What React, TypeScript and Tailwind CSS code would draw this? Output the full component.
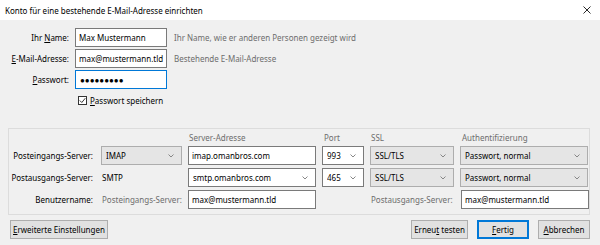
import React from "react"

function Chevron() {
  return (
    <svg width="6" height="4" viewBox="0 0 6 4" className="shrink-0">
      <path d="M0.5 0.5 L3 3 L5.5 0.5" fill="none" stroke="#7a7a7a" strokeWidth="0.9" />
    </svg>
  )
}

function Select({ value, w, editable }: { value: string; w: string; editable?: boolean }) {
  return (
    <div
      className={
        "flex h-[19px] items-center justify-between border pl-[4px] pr-[7px] " +
        w +
        (editable ? " border-[#7a7a7a] bg-white" : " border-[#adadad] bg-[#e5e5e5]")
      }
    >
      <span className="truncate">{value}</span>
      <Chevron />
    </div>
  )
}

function Input({ value, w, focus }: { value: string; w: string; focus?: boolean }) {
  return (
    <div
      className={
        "flex h-[19px] items-center overflow-hidden border bg-white px-[3px] " +
        w +
        (focus ? " border-[#0078d7]" : " border-[#7a7a7a]")
      }
    >
      <span>{value}</span>
    </div>
  )
}

function Button({ children, w, primary }: { children: React.ReactNode; w: string; primary?: boolean }) {
  return (
    <div
      className={
        "flex h-[19px] items-center justify-center bg-[#e1e1e1] " +
        w +
        (primary ? " border-2 border-[#0078d7]" : " border border-[#adadad]")
      }
    >
      {children}
    </div>
  )
}

export default function App() {
  return (
    <div
      className="flex h-[245px] w-[600px] flex-col overflow-hidden whitespace-nowrap bg-[#f0f0f0] text-[8px] leading-[11px] text-black"
      style={{ fontFamily: '"Noto Sans", "Open Sans", sans-serif' }}
    >
      <div className="flex h-[20px] shrink-0 items-center justify-between bg-white pl-[5px] pr-[9px]">
        <span>Konto für eine bestehende E-Mail-Adresse einrichten</span>
        <svg width="8" height="8" viewBox="0 0 8 8">
          <path d="M0.5 0.5 L7.5 7.5 M7.5 0.5 L0.5 7.5" stroke="#111" strokeWidth="0.9" />
        </svg>
      </div>

      <div className="flex flex-col gap-[2px] pt-[8px]">
        <div className="flex items-center">
          <span className="w-[69px] text-right">
            Ihr <u>N</u>ame:
          </span>
          <Input value="Max Mustermann" w="ml-[6px] w-[92px]" />
          <span className="ml-[7px] text-[#6d6d6d]">Ihr Name, wie er anderen Personen gezeigt wird</span>
        </div>
        <div className="flex items-center">
          <span className="w-[69px] text-right">
            <u>E</u>-Mail-Adresse:
          </span>
          <Input value="max@mustermann.tld" w="ml-[6px] w-[92px]" />
          <span className="ml-[7px] text-[#6d6d6d]">Bestehende E-Mail-Adresse</span>
        </div>
        <div className="flex items-center">
          <span className="w-[69px] text-right">
            <u>P</u>asswort:
          </span>
          <Input value="●●●●●●●●●" w="ml-[6px] w-[92px] pl-[4px] text-[8px] tracking-[0px]" focus />
        </div>
        <div className="flex items-center pl-[78px] pt-[4px]">
          <div className="flex h-[9px] w-[9px] items-center justify-center border border-[#333] bg-white">
            <svg width="7" height="7" viewBox="0 0 7 7">
              <path d="M0.8 3.5 L2.8 5.5 L6.3 1.2" fill="none" stroke="#222" strokeWidth="0.9" />
            </svg>
          </div>
          <span className="ml-[3px]">
            <u>P</u>asswort speichern
          </span>
        </div>
      </div>

      <div className="ml-[8px] mt-[22px] flex h-[87px] w-[582px] shrink-0 flex-col border border-[#dcdcdc] pt-[3px]">
        <div className="flex h-[14px] items-start text-[#6d6d6d]">
          <span className="ml-[180px] w-[134px]">Server-Adresse</span>
          <span className="ml-[1px] w-[47px]">Port</span>
          <span className="w-[91px]">SSL</span>
          <span>Authentifizierung</span>
        </div>
        <div className="flex flex-col gap-[3px]">
          <div className="flex items-center">
            <span className="w-[84px] text-right">Posteingangs-Server:</span>
            <Select value="IMAP" w="ml-[8px] w-[81px]" />
            <Input value="imap.omanbros.com" w="ml-[6px] w-[128px]" />
            <Select value="993" w="ml-[6px] w-[42px]" editable />
            <Select value="SSL/TLS" w="ml-[6px] w-[84px]" />
            <Select value="Passwort, normal" w="ml-[6px] w-[128px]" />
          </div>
          <div className="flex items-center">
            <span className="w-[84px] text-right">Postausgangs-Server:</span>
            <span className="ml-[9px] w-[86px]">SMTP</span>
            <Select value="smtp.omanbros.com" w="w-[128px]" editable />
            <Select value="465" w="ml-[6px] w-[42px]" editable />
            <Select value="SSL/TLS" w="ml-[6px] w-[84px]" />
            <Select value="Passwort, normal" w="ml-[6px] w-[128px]" />
          </div>
          <div className="flex items-center">
            <span className="w-[84px] text-right">Benutzername:</span>
            <span className="ml-[9px] w-[86px] text-[#6d6d6d]">Posteingangs-Server:</span>
            <Input value="max@mustermann.tld" w="w-[128px]" />
            <span className="ml-[55px] w-[90px] text-[#6d6d6d]">Postausgangs-Server:</span>
            <Input value="max@mustermann.tld" w="w-[128px]" />
          </div>
        </div>
      </div>

      <div className="mt-[5px] flex items-center pl-[10px] pr-[10px]">
        <Button w="w-[98px]">
          <span>
            <u>E</u>rweiterte Einstellungen
          </span>
        </Button>
        <div className="ml-auto flex gap-[9px]">
          <Button w="w-[57px]">
            <span>
              Erneu<u>t</u> testen
            </span>
          </Button>
          <Button w="w-[52px]" primary>
            <span>
              <u>F</u>ertig
            </span>
          </Button>
          <Button w="w-[52px]">
            <span>
              <u>A</u>bbrechen
            </span>
          </Button>
        </div>
      </div>
    </div>
  )
}
